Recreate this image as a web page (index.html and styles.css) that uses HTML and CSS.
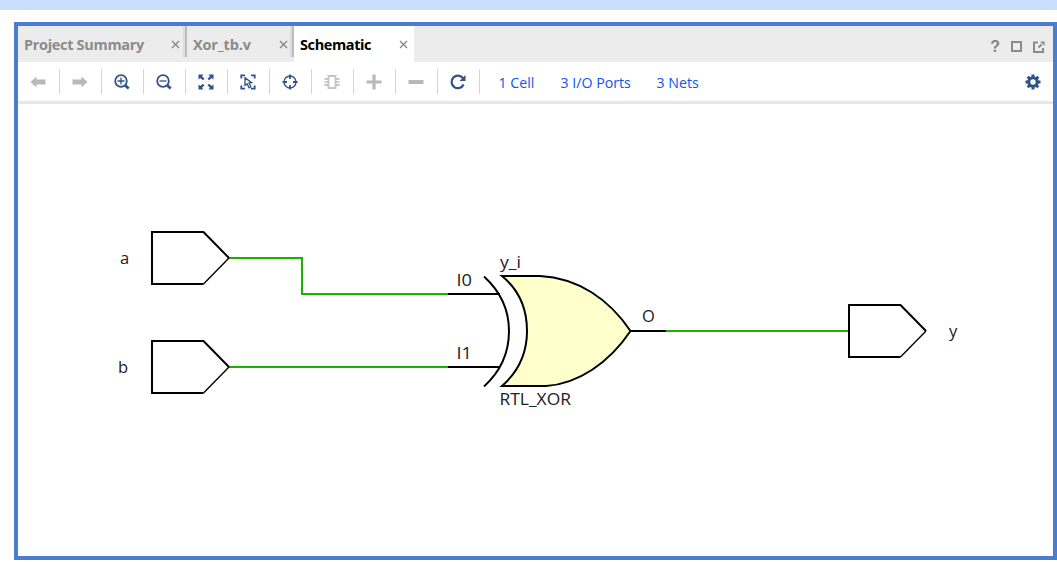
FILE: index.html
```html
<!DOCTYPE html>
<html lang="en">
<head>
<meta charset="utf-8">
<title>Schematic</title>
<link rel="stylesheet" href="styles.css">
</head>
<body>
<div class="strip"></div>
<main class="window">
  <header class="tabs">
    <div class="tab tab-summary"><span class="label">Project Summary</span><svg class="close" width="9" height="9" viewBox="0 0 9 9"><path d="M1 1l7 7M8 1L1 8"/></svg></div>
    <div class="tab tab-file"><span class="label">Xor_tb.v</span><svg class="close" width="9" height="9" viewBox="0 0 9 9"><path d="M1 1l7 7M8 1L1 8"/></svg></div>
    <div class="tab tab-active"><span class="label">Schematic</span><svg class="close" width="9" height="9" viewBox="0 0 9 9"><path d="M1 1l7 7M8 1L1 8"/></svg></div>
    <div class="window-actions">
      <span class="help">?</span>
      <svg width="11" height="11" viewBox="0 0 11 11"><path d="M1 1h9v9H1z"/></svg>
      <svg width="12" height="12" viewBox="0 0 12 12"><path d="M5 1.500H1v9.500h9V7M5.500 6.500L8.500 3.500"/><path class="tip" d="M7 .5h4.500V5z"/></svg>
    </div>
  </header>
  <nav class="toolbar">
    <span class="tool off"><svg viewBox="0 0 18 18"><path class="solid" d="M1.500 9L7.500 3.500V6.500H16.500V11.500H7.500V14.500z"/></svg></span>
    <span class="tool off"><svg viewBox="0 0 18 18"><path class="solid" d="M16.500 9L10.500 3.500V6.500H1.500V11.500H10.500V14.500z"/></svg></span>
    <span class="tool"><svg viewBox="0 0 18 18"><circle cx="8" cy="8" r="5.800"/><path class="thin" d="M4.500 8h7M8 4.500v7"/><path class="thick" d="M12.300 12.500l3.400 3"/></svg></span>
    <span class="tool"><svg viewBox="0 0 18 18"><circle cx="8" cy="8" r="5.800"/><path class="thin" d="M4.500 8h7"/><path class="thick" d="M12.300 12.500l3.400 3"/></svg></span>
    <span class="tool"><svg viewBox="0 0 18 18"><path class="solid" d="M1.500 1.500H6.500L5 3.200 7.500 5.700 5.900 7.300 3.300 4.900 1.500 6.500zM16.500 1.500H11.500L13 3.200 10.500 5.700 12.100 7.300 14.700 4.900 16.500 6.500zM1.500 16.500H6.500L5 14.800 7.500 12.300 5.900 10.700 3.300 13.100 1.500 11.500zM16.500 16.500H11.500L13 14.800 10.500 12.300 12.100 10.700 14.700 13.100 16.500 11.500z"/></svg></span>
    <span class="tool"><svg viewBox="0 0 18 18"><path d="M2.300 5.500V2.300H6M12 2.300h3.700v3.200M2.300 12.500v3.200H6M12 15.700h3.700v-3.200"/><path class="thin" d="M6 4.800v7.700l2.100-1.700 2 4 1.800-1-1.900-3.700 2.700-.4z"/></svg></span>
    <span class="tool"><svg viewBox="0 0 18 18"><circle class="thin" cx="9" cy="9" r="6"/><path d="M9 1.500v4.500M9 12v4.500M1.500 9H6M12 9h4.500"/></svg></span>
    <span class="tool off chip"><svg viewBox="0 0 18 18"><path d="M5.500 3h7v12h-7zM1.500 6h4M1.500 12h4M12.500 6h4M12.500 12h4"/><path class="thin" d="M1.500 9h4M12.500 9h4"/></svg></span>
    <span class="tool off"><svg viewBox="0 0 18 18"><path class="solid" d="M7.400 1.500h3.200v5.900h5.900v3.200h-5.900v5.900H7.400v-5.900H1.500V7.400h5.900z"/></svg></span>
    <span class="tool off"><svg viewBox="0 0 18 18"><path class="solid" d="M1.500 7h15v4h-15z"/></svg></span>
    <span class="tool"><svg viewBox="0 0 18 18"><path class="arc" d="M14 5.200A6.300 6.300 0 1 0 14.600 11.500"/><path class="solid" d="M16.500 2v6h-6z"/></svg></span>
    <div class="links"><a class="cells">1 Cell</a><a class="ports">3 I/O Ports</a><a class="nets">3 Nets</a></div>
    <svg class="gear" width="18" height="18" viewBox="0 0 18 18"><circle cx="9" cy="9" r="4.200"/><path d="M9 1.500v3M9 13.500v3M1.500 9h3M13.500 9h3M3.700 3.700l2.100 2.100M12.200 12.200l2.100 2.100M3.700 14.300l2.100-2.100M12.200 5.800l2.100-2.100"/></svg>
  </nav>
  <section class="canvas">
    <svg class="schematic" width="1035" height="452" viewBox="18 104 1035 452">
      <g class="net"><path d="M229 258H302V294H449M229 367H449M666 331H849"/></g>
      <g class="pin"><path d="M448 294H500M448 367H500M630 331H666"/></g>
      <g class="port">
        <path d="M203.500 284H152V232H203.500L229 258"/><path class="edge" d="M229 258L203.500 284"/>
        <path d="M203.500 393H152V341H203.500L229 367"/><path class="edge" d="M229 367L203.500 393"/>
        <path d="M900.500 357H849V305H900.500L926 331"/><path class="edge" d="M926 331L900.500 357"/>
      </g>
      <path class="gate" d="M502 276H540C578 278 609 299 630.500 331C609 363 578 384 546 386H502C519 371 527 352 527 331C527 310 519 290 502 276z"/>
      <path class="gate-back" d="M484 276.500C501 292 509 311 509 331C509 351 501 371 484 386.500"/>
      <g class="names">
        <text x="120" y="264">a</text>
        <text x="118" y="373">b</text>
        <text x="949" y="337">y</text>
        <text x="456.500" y="286" textLength="15.500" lengthAdjust="spacingAndGlyphs">I0</text>
        <text x="456.500" y="359" textLength="15.500" lengthAdjust="spacingAndGlyphs">I1</text>
        <text x="500" y="268" textLength="21" lengthAdjust="spacingAndGlyphs">y_i</text>
        <text x="499.500" y="405" textLength="71.500" lengthAdjust="spacingAndGlyphs">RTL_XOR</text>
        <text x="642" y="322">O</text>
      </g>
    </svg>
  </section>
</main>
</body>
</html>
```
FILE: styles.css
```css
* { box-sizing: border-box; }
body {
  margin: 0;
  height: 562px;
  overflow: hidden;
  background: #fff;
  font-family: "Open Sans", "Noto Sans", sans-serif;
}
svg { display: block; fill: none; flex: none; }
.strip { height: 10px; background: #ccdeff; }
.window {
  display: flex;
  flex-direction: column;
  width: 1043px;
  height: 538px;
  margin: 12px 0 0 14px;
  border: 4px solid #4a7ccf;
}
.tabs { display: flex; height: 36px; flex: none; background: #ececec; }
.tab {
  display: flex;
  justify-content: space-between;
  align-items: center;
  height: 36px;
  padding: 0 7px 0 6px;
  color: #8b8b8b;
  font-size: 14.5px;
  font-weight: 700;
  white-space: nowrap;
}
.tab-summary, .tab-file {
  height: 31px;
  padding-top: 5px;
  border-right: 2px solid #bdbdbd;
  box-shadow: inset -2px 0 #dcdcdc;
}
.tab-summary { width: 169px; padding-right: 5px; letter-spacing: -.32px; }
.tab-file { width: 107px; padding-right: 4px; letter-spacing: -.15px; }
.tab-active { width: 120px; padding-right: 6.5px; background: #fff; color: #000; letter-spacing: -.4px; }
.close { stroke: #858585; stroke-width: 1.3; }
.window-actions {
  display: flex;
  align-items: center;
  gap: 11px;
  margin-left: auto;
  padding: 5px 8px 0 0;
}
.window-actions svg { stroke: #8b8b8b; stroke-width: 2; }
.window-actions .tip { fill: #8b8b8b; stroke: none; }
.help { color: #858585; font: 700 16px/16px "Liberation Sans", sans-serif; }
.toolbar {
  display: flex;
  align-items: center;
  height: 42px;
  flex: none;
  border-bottom: 3px solid #e7e7e7;
}
.tool {
  display: flex;
  align-items: center;
  width: 42px;
  height: 25px;
  padding: 0 0 0 11px;
  border-right: 1px solid #d5d5d5;
  color: #31518b;
}
.tool svg { width: 18px; height: 18px; stroke: currentColor; stroke-width: 1.8; }
.tool .solid { fill: currentColor; stroke: none; }
.tool .thick { stroke-width: 2.8; }
.tool .arc { stroke-width: 2.2; }
.tool .thin { stroke-width: 1.3; }
.off { color: #b9b9b9; }
.chip { color: #c5c5c5; }
.links { display: flex; margin-left: 18.5px; color: #0c55f4; font-size: 14.2px; line-height: 20px; white-space: nowrap; padding-top: 2px; }
.cells { width: 62px; }
.ports { width: 96px; }
.gear { margin: 0 11.5px 0 auto; stroke: #31518b; stroke-width: 3; }
.canvas { flex: 1; min-height: 0; }
.net { stroke: #1cb000; stroke-width: 2; }
.pin, .port, .gate, .gate-back { stroke: #000; stroke-width: 2; }
.port .edge { stroke-width: 1.4; }
.gate { fill: #ffffcc; }
.names { fill: #202020; font-size: 16.5px; }
```
